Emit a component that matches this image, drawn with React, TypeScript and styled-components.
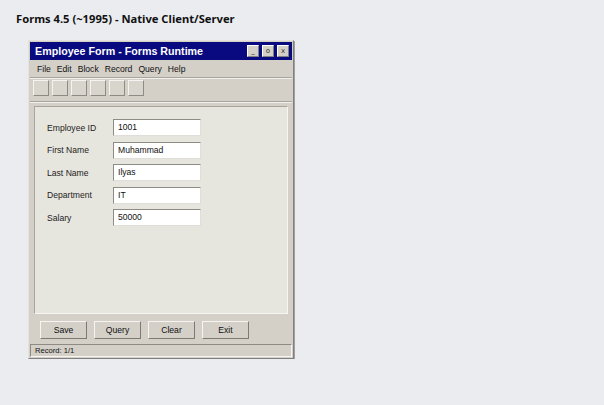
import React from "react";
import styled, { createGlobalStyle } from "styled-components";

const Global = createGlobalStyle`
  html, body {
    margin: 0;
    padding: 0;
    background: #eaecf0;
  }
  body {
    font-family: "Liberation Sans", Arial, sans-serif;
  }
`;

const Page = styled.div`
  padding: 11px 16px 0 16px;
`;

const Heading = styled.h1`
  margin: 0 0 13px 0;
  font-family: "Noto Sans", "Open Sans", sans-serif;
  font-size: 11.2px;
  font-weight: 700;
  line-height: 16px;
  color: #111;
`;

const Window = styled.div`
  width: 262px;
  margin-left: 12px;
  background: #d4d0c8;
  border: 1px solid;
  border-color: #e4e2dc #808080 #808080 #e4e2dc;
  box-shadow: 1px 1px 0 #a0a0a0;
  padding: 1px;
`;

const TitleBar = styled.div`
  height: 18px;
  background: #0a0a80;
  display: flex;
  align-items: center;
  justify-content: space-between;
  padding: 0 3px 0 5px;
`;

const TitleText = styled.span`
  color: #fff;
  font-family: "Liberation Sans", Arial, sans-serif;
  font-size: 10.7px;
  font-weight: 700;
`;

const TitleButtons = styled.div`
  display: flex;
  gap: 3px;
`;

const TitleButton = styled.div`
  width: 12px;
  height: 12px;
  box-sizing: border-box;
  background: #d4d0c8;
  border: 1px solid;
  border-color: #fff #808080 #808080 #fff;
  font-size: 7px;
  line-height: 10px;
  text-align: center;
  color: #333;
  font-family: "DejaVu Sans", sans-serif;
`;

const MenuBar = styled.div`
  display: flex;
  height: 17px;
  align-items: center;
  padding-left: 4px;
  border-bottom: 1px solid #a8a59e;
  box-shadow: 0 1px 0 #f2f1ed;
`;

const MenuItem = styled.span`
  font-size: 8.6px;
  color: #111;
  padding: 0 3px;
`;

const Toolbar = styled.div`
  display: flex;
  gap: 3px;
  padding: 2px 3px 0 3px;
  height: 24px;
  box-sizing: border-box;
  border-bottom: 1px solid #a8a59e;
  box-shadow: 0 1px 0 #f2f1ed;
`;

const ToolButton = styled.div`
  width: 16px;
  height: 16px;
  box-sizing: border-box;
  background: #d8d5cd;
  border: 1px solid;
  border-color: #f4f3ef #8e8b84 #8e8b84 #f4f3ef;
`;

const Panel = styled.div`
  margin: 4px 4px 0 4px;
  height: 208px;
  box-sizing: border-box;
  background: #e7e6de;
  border: 1px solid;
  border-color: #a8a59e #f6f5f1 #f6f5f1 #a8a59e;
  padding: 12px 0 0 12px;
  display: flex;
  flex-direction: column;
  gap: 5.5px;
`;

const Row = styled.div`
  display: flex;
  align-items: center;
  height: 17px;
`;

const Label = styled.span`
  width: 66px;
  font-size: 8.6px;
  color: #222;
`;

const Field = styled.div`
  width: 88px;
  height: 17px;
  box-sizing: border-box;
  background: #fff;
  border: 1px solid;
  border-color: #8e8b84 #e0ded8 #e0ded8 #8e8b84;
  font-size: 8.6px;
  line-height: 15px;
  padding-left: 4px;
  color: #111;
`;

const ButtonRow = styled.div`
  display: flex;
  gap: 7px;
  padding: 7px 0 0 10px;
  height: 18px;
`;

const Button = styled.div`
  width: 47px;
  height: 18px;
  box-sizing: border-box;
  background: #d4d0c8;
  border: 1px solid;
  border-color: #f6f5f1 #7c7a74 #7c7a74 #f6f5f1;
  font-size: 8.6px;
  line-height: 16px;
  text-align: center;
  color: #111;
`;

const StatusBar = styled.div`
  margin: 5px 0 0 0;
  height: 13px;
  box-sizing: border-box;
  border: 1px solid;
  border-color: #8e8b84 #f6f5f1 #f6f5f1 #8e8b84;
  font-size: 7.6px;
  line-height: 11px;
  padding-left: 4px;
  color: #111;
`;

const menus = ["File", "Edit", "Block", "Record", "Query", "Help"];

const fields = [
  { label: "Employee ID", value: "1001" },
  { label: "First Name", value: "Muhammad" },
  { label: "Last Name", value: "Ilyas" },
  { label: "Department", value: "IT" },
  { label: "Salary", value: "50000" },
];

const actions = ["Save", "Query", "Clear", "Exit"];

export default function App() {
  return (
    <>
      <Global />
      <Page>
        <Heading>Forms 4.5 (~1995) - Native Client/Server</Heading>
        <Window>
          <TitleBar>
            <TitleText>Employee Form - Forms Runtime</TitleText>
            <TitleButtons>
              <TitleButton>_</TitleButton>
              <TitleButton>o</TitleButton>
              <TitleButton>x</TitleButton>
            </TitleButtons>
          </TitleBar>
          <MenuBar>
            {menus.map((m) => (
              <MenuItem key={m}>{m}</MenuItem>
            ))}
          </MenuBar>
          <Toolbar>
            {Array.from({ length: 6 }).map((_, i) => (
              <ToolButton key={i} />
            ))}
          </Toolbar>
          <Panel>
            {fields.map((f) => (
              <Row key={f.label}>
                <Label>{f.label}</Label>
                <Field>{f.value}</Field>
              </Row>
            ))}
          </Panel>
          <ButtonRow>
            {actions.map((a) => (
              <Button key={a}>{a}</Button>
            ))}
          </ButtonRow>
          <StatusBar>Record: 1/1</StatusBar>
        </Window>
      </Page>
    </>
  );
}
